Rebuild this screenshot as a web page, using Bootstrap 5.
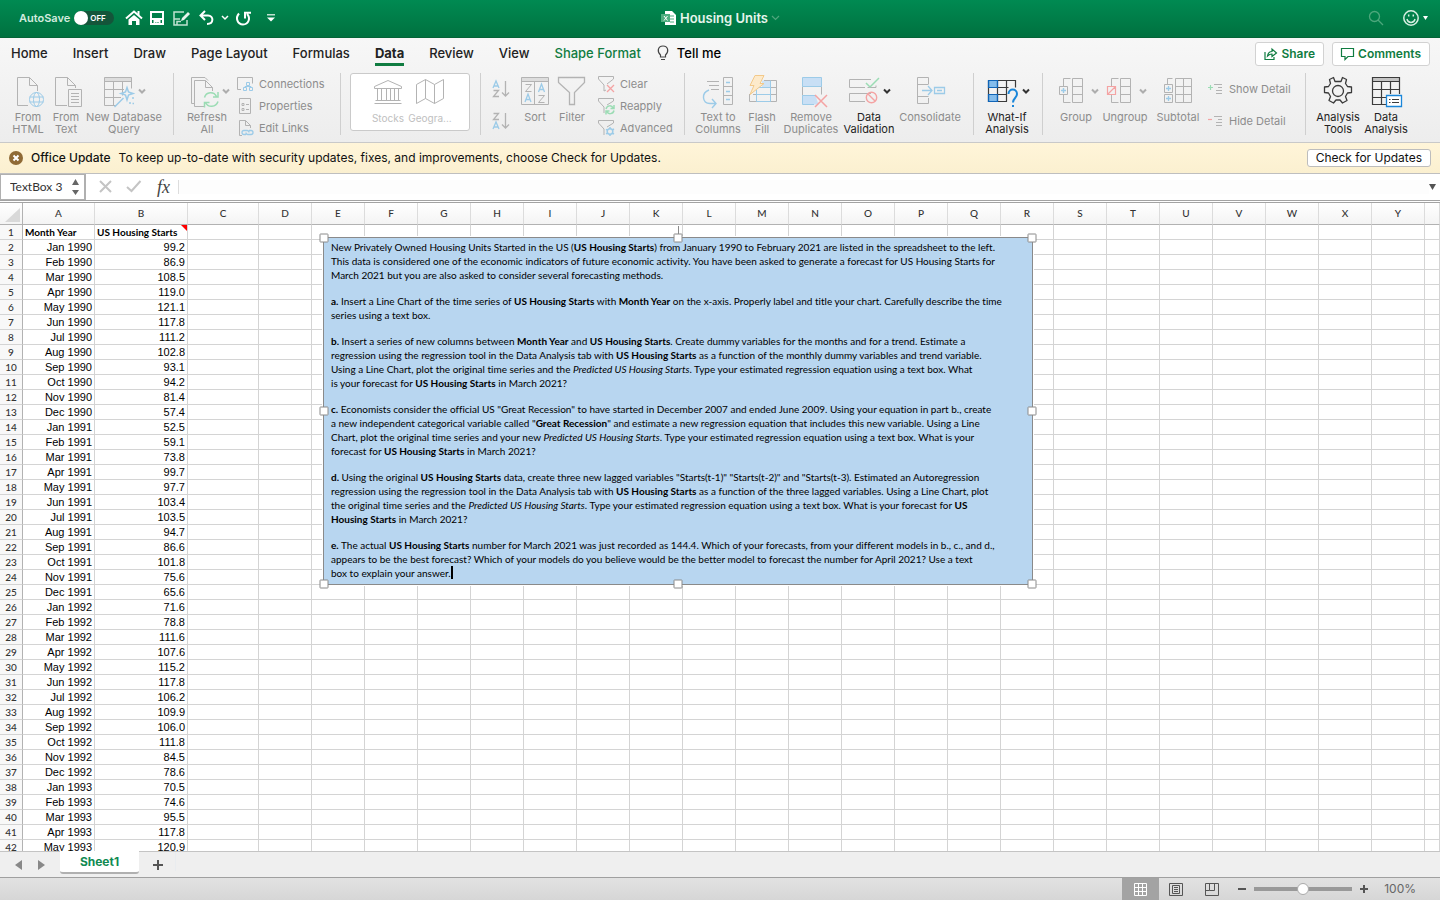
<!DOCTYPE html>
<html lang="en">
<head>
<meta charset="utf-8">
<meta name="viewport" content="width=device-width, initial-scale=1">
<title>Housing Units</title>
<link rel="stylesheet" href="https://cdn.jsdelivr.net/npm/bootstrap@5.3.0/dist/css/bootstrap.min.css">
<style>
:root{--ui:Inter,"Liberation Sans",sans-serif;--cal:Lato,"Open Sans",sans-serif;--g:#107c41}
body{font-family:var(--ui);font-size:13px;line-height:16px;color:#222;background:#fff}
a{text-decoration:none;color:inherit}
button{color:inherit}
svg{display:block;overflow:visible;fill:none;flex:none}
.plain{border:0;background:none;padding:0}
/* title bar */
.titlebar{height:38px;background:linear-gradient(#008a52,#00713f);color:#fff;display:grid;grid-template-columns:1fr auto 1fr;border-bottom:1px solid #056437}
.autosave{font-size:11px;font-weight:600;color:#d3ebdf}
.lead-in{padding-left:19px}
.switch{position:relative;width:40px;height:14px}
.switch input{appearance:none;width:40px;height:14px;border-radius:7px;background:#14553a;margin:0;display:block}
.switch input::before{content:"";display:block;width:14px;height:14px;border-radius:50%;background:#fff}
.switch span{position:absolute;left:16px;top:0;font-size:8px;line-height:14px;font-weight:600;color:#fff;pointer-events:none}
.doc{font-weight:600;color:#e6f4ec}
/* tabs and ribbon */
.top{background:linear-gradient(#f7f7f7,#ededed);border-bottom:1px solid #c9c9c9}
.tabs{height:34px;padding:0 10px 0 11px}
.tabs ul{gap:25px}
.tabs ul a{font-weight:500;display:block;line-height:20px;border-bottom:3px solid transparent;margin-top:5px}
.tabs ul a.on{font-weight:700;border-color:var(--g)}
.tabs .tell{font-weight:500;color:#000;margin-top:7px}
.green{color:var(--g)}
.pill{height:24px;border:1px solid #d2d2d2;border-radius:3px;background:#fff;color:var(--g);font-weight:600;font-size:12px;padding:0 8px}
.ribbon{height:70px}
.grp{height:62px;margin-top:1px;border-right:1px solid #cfcfcf;box-sizing:border-box}
.grp:last-child{border:0}
.rb{display:flex;flex-direction:column;align-items:center;font-size:11px;line-height:12px;color:#8d8d8d;white-space:nowrap;text-align:center}
.rb svg{margin-top:1px;width:50px;height:37px}
.rb.act{color:#222}
.lst{display:flex;flex-direction:column}
.lst button{display:flex;align-items:center;gap:6px;height:22px;font-size:11px;color:#8d8d8d;white-space:nowrap}
.lst svg{width:16px;height:16px}
.lst.two button{height:32px;gap:7px}
.lst.two svg{width:14px}
.lst.two .wide{width:20px}
.w30{width:30px}.w34{width:34px}.w36{width:36px}.w38{width:38px}.w42{width:42px}.w44{width:44px}.w46{width:46px}.w54{width:54px}.w60{width:60px}.w78{width:78px}
.g1{width:174px;padding-left:9px}.g2{width:167px;padding-left:11px}.g3{width:140px;padding-left:9px}.g4{width:204px;padding-left:11px}
.g5{width:289px;padding-left:11px}.g6{width:69px;padding-left:10px}.g7{width:263px;padding-left:15px}.g8{padding-left:10px}
.gallery{width:120px;height:58px;background:#fff;border:1px solid #cacaca;border-radius:3px;padding-left:16px}
.gallery .rb{font-size:10px;color:#c0c0c0}
.k{stroke:#b3b3b3}.d{stroke:#3b3b3b}.b{stroke:#9ccbe8}.r{stroke:#f4a3a3}.n{stroke:#9bdcb4}.car{stroke:#adadad;stroke-width:2}
.car.d{stroke:#333}
/* message bar */
.msg{height:31px;background:linear-gradient(#fff5d9,#fbf0d0);border-bottom:1px solid #bfbfbf;padding:0 9px;color:#111;font-size:12px}
.msg b{font-weight:500}
.check{height:18px;line-height:16px;border:1px solid #bdbdbd;border-radius:3px;background:#fff;font-size:12px;padding:0 8px}
/* formula bar */
.fbar{height:27px;border-bottom:1px solid #a3a3a3}
.namebox{width:86px;border:1px solid #b0b0b0;border-right-width:2px;font-family:var(--cal);font-size:12px}
.namebox input{width:63px;border:0;padding:0 0 0 9px;outline:0;background:none;color:#333}
.tools{gap:16px;margin-left:14px}
.fx{font-family:"Liberation Serif",serif;font-style:italic;font-size:18px;color:#444}
.fin{border:0;border-left:1px solid #ddd;height:14px;outline:0;background:#fdfdfd}
/* sheet */
.work{border-top:1px solid #a3a3a3;margin-top:1px;min-height:0;overflow:hidden}
.cells{table-layout:fixed;width:100%;border-collapse:separate;border-spacing:0;font:11px/14px "Liberation Sans",sans-serif;color:#000}
.cells td,.cells th{padding:0 2px;border-right:1px solid #d4d4d4;border-bottom:1px solid #d4d4d4;white-space:nowrap;height:15px;overflow:hidden}
.cells td{text-align:right}
.cells tbody th,.cells thead th{font:500 10px/14px var(--cal);color:#333;text-align:center;background:#f8f8f8;padding:0}
.cells thead th{height:22px;border-bottom-color:#b2b2b2;border-right-color:#dcdcdc;background:linear-gradient(#fff,#f4f4f4)}
.cells tbody th,.cells thead th:first-child{border-right-color:#b2b2b2}
.cells tbody tr:first-child td{font:700 10px/14px var(--cal);text-align:left}
.note{position:relative}
.note::after{content:"";position:absolute;right:0;top:0;border:3px solid red;border-left-color:transparent;border-bottom-color:transparent}
.corner{margin:5px 2px 2px 5px;width:15px;height:14px}
.tbox{position:absolute;left:323px;top:34px;width:710px;padding:2px 7px 4px;background:#b8d6f0;border:1px solid #8a8a8a;box-shadow:0 0 0 1px #fff;font:10px/14px var(--cal);font-variant-ligatures:none;color:#000;white-space:nowrap}
.tbox p{margin:0 0 12px}.tbox p:last-of-type{margin:0}
.hd{position:absolute;width:9px;height:9px;background:#fff;border:1px solid #8a8a8a;border-radius:1px;transform:translate(-50%,-50%)}
.stem{position:absolute;left:50%;bottom:100%;height:12px;border-left:1px solid #8a8a8a}
.caret{display:inline-block;width:2px;height:13px;background:#000;vertical-align:-2px}
/* bottom bars */
.sheets{height:27px;background:#efefef;border-top:1px solid #c4c4c4;border-bottom:1px solid #a0a0a0;padding-left:15px}
.sheettab{width:79px;height:23px;margin:-1px 0 0 15px;background:#fff;color:#108a52;font-weight:700;font-size:12px;border:0;border-bottom:2px solid #b0b0b0;border-radius:0 0 3px 3px}
.newtab{margin-left:14px}
.status{height:22px;background:linear-gradient(#e2e2e2,#d6d6d6);color:#666;font-size:12px}
.vw{width:37px;height:22px;display:flex;align-items:center;justify-content:center}
.vw.mid{width:34px}
.vw.on{background:#a3a3a3}
.zoomer{appearance:none;width:98px;height:14px;background:linear-gradient(#999,#999) center/100% 4px no-repeat;margin:0;border-radius:2px}
.zoomer::-webkit-slider-thumb{appearance:none;width:12px;height:12px;border-radius:50%;background:#fff;border:1px solid #aaa}
</style>
</head>
<body class="vh-100 d-flex flex-column overflow-hidden">
<header class="titlebar">
  <div class="d-flex align-items-center lead-in">
    <label for="as" class="autosave">AutoSave</label>
    <div class="switch ms-1"><input type="checkbox" id="as"><span>OFF</span></div>
    <button class="plain ms-2 ps-1" aria-label="Home"><svg width="16" height="16" stroke="#fff" stroke-width="2"><path d="M0 8.500 8 1.500l8 7"/><path d="M2.500 9.500 8 5l5.500 4.500V15h-3.500v-4H6v4H2.500z" fill="#fff" stroke="none"/><path d="M12.500 1v4" /></svg></button>
    <button class="plain ms-2" aria-label="Save"><svg width="14" height="14" stroke="#fff" stroke-width="2"><path d="M1 1h12v12H1z"/><path d="M1 8h12M4.500 13v-3h5v3"/><path d="M6 11h1v2" stroke-width="1"/></svg></button>
    <button class="plain ms-2" aria-label="Save as"><svg width="19" height="15" stroke="#bfe2d0" stroke-width="1.500"><path d="M12 1H2v13h13V9M2 8h6M5 13.500v-3h4"/><path d="m9 10 1-3 6-6 2 2-6 6z" fill="#e6f4ec" stroke="none"/></svg></button>
    <button class="plain ms-2" aria-label="Undo"><svg width="15" height="14" stroke="#fff" stroke-width="2"><path d="M6 0 1.500 4.500 6 9M2 4.500h7c6 0 6 8.500-1 8.500"/></svg></button>
    <button class="plain ms-2" aria-label="Undo list"><svg width="6" height="4" stroke="#fff" stroke-width="1.500"><path d="m0 0 3 3 3-3"/></svg></button>
    <button class="plain ms-2" aria-label="Redo"><svg width="15" height="15" stroke="#fff" stroke-width="2"><path d="M3 2.500C-1 7 1.500 13.500 7 13.500S15 7 11 3M9 7.500V1.800h6"/></svg></button>
    <button class="plain ms-3" aria-label="Customize toolbar"><svg width="8" height="8" fill="#fff"><path d="M0 0h8v1.500H0z" fill="#bfe2d0"/><path d="M0 3.500h8L4 7.500z" fill="#fff"/></svg></button>
  </div>
  <div class="d-flex align-items-center doc gap-1">
    <svg width="15" height="14"><path d="M4 0h7l4 4v10H4z" fill="#fff"/><path d="M9 5h4M9 8h4M9 11h4" stroke="#4eae80"/><path d="M0 3h9v8H0z" fill="#4eae80"/><path d="m3 5 3.500 4.500M6.500 5 3 9.500" stroke="#fff"/></svg>
    <span>Housing Units</span>
    <svg width="7" height="4" stroke="#4fa67d" stroke-width="1.200"><path d="m0 0 3.500 3.500L7 0"/></svg>
  </div>
  <div class="d-flex align-items-center justify-content-end pe-2 me-1">
    <button class="plain" aria-label="Search"><svg width="14" height="14" stroke="#4da77c" stroke-width="1.300"><circle cx="5.500" cy="5.500" r="5"/><path d="m9 9 5 5"/></svg></button>
    <button class="plain d-flex align-items-center ms-3 gap-1" aria-label="Feedback"><svg class="ms-1" width="16" height="16" stroke="#d6efe2" stroke-width="1.500"><circle cx="8" cy="8" r="7.200"/><path d="M4 9c1 4.500 7 4.500 8 0M5.700 4.500v2M10.300 4.500v2"/></svg><svg width="5" height="4"><path d="M0 0h5L2.500 4z" fill="#fff"/></svg></button>
  </div>
</header>

<div class="top">
  <nav class="tabs d-flex align-items-start">
    <ul class="list-unstyled d-flex m-0">
      <li><a href="#">Home</a></li><li><a href="#">Insert</a></li><li><a href="#">Draw</a></li><li><a href="#">Page Layout</a></li><li><a href="#">Formulas</a></li><li><a href="#" class="on">Data</a></li><li><a href="#">Review</a></li><li><a href="#">View</a></li><li><a href="#" class="green">Shape Format</a></li>
    </ul>
    <a href="#" class="tell d-flex align-items-center gap-2 ms-3"><svg width="12" height="16" stroke="#444" stroke-width="1.200"><path d="M3.500 12V10C0 7 .500 1 6 1s6 6 2.500 9v2zM4 14.500h4"/></svg>Tell me</a>
    <div class="ms-auto d-flex gap-2 pt-1">
      <button class="pill d-flex align-items-center gap-1"><svg width="13" height="12" stroke="#107c41" stroke-width="1.200"><path d="M1 4v7.500h9V9"/><path d="M3.500 8C4 5 5.500 3.500 8 3.500V1l4.500 4L8 8.500V6C6 6 5 6.500 3.500 8z"/></svg>Share</button>
      <button class="pill d-flex align-items-center gap-1"><svg width="13" height="12" stroke="#107c41" stroke-width="1.200"><path d="M.500.500h12v8H7L4 11.500V8.500H.500z"/></svg>Comments</button>
    </div>
  </nav>
  <div class="ribbon d-flex">
    <div class="grp g1 d-flex align-items-start">
      <button class="plain rb w38"><svg viewBox="-25 0 50 37"><g class="k"><path d="M0 31.500h-10.500v-28h12l8 8V17M1.500 3.500v8h8"/></g><g class="b"><circle cx="8.500" cy="25.500" r="7"/><ellipse cx="8.500" cy="25.500" rx="3" ry="7"/><path d="M1.500 23h14M1.500 28h14"/></g></svg>From<br>HTML</button>
      <button class="plain rb w38"><svg viewBox="-25 0 50 37"><g class="k"><path d="M1 31.500h-11.500v-28h12l8 8V14M1.500 3.500v8h8M2.500 15.500h13v17h-13zM5 19.500h8M5 22.500h8M5 25.500h8M5 28.500h8"/></g></svg>From<br>Text</button>
      <button class="plain rb w78"><svg viewBox="-25 0 50 37"><path d="M-20 3.500H8v4h-28z" fill="#ddd"/><path class="k" d="M-8 31.500h-11.500v-28h27v11M-19.500 7.500h27M-19.500 15.500H0M-19.500 23.500H-3M-10.500 7.500v24M-1.500 7.500v14"/><path class="b" stroke-width="1.500" d="M-9.500 33-.500 24M3 13.500l1.500 4.500 4.500 1.500L4.500 21 3 26l-1.500-5L-3 19.500 1.500 18zM8 24h2M5 29h2M8.500 29.500h1.500"/><path class="car" d="m15 15.500 3 3 3-3"/></svg>New Database<br>Query</button>
    </div>
    <div class="grp g2 d-flex align-items-start">
      <button class="plain rb w44"><svg viewBox="-25 0 50 37"><path class="k" d="M-13 29.500h-2.500v-26H-2l3 3M-3 32.500h-9.500v-26h11l7 7V17M-1.500 6.500v7h7"/><path class="n" stroke-width="1.500" d="M-2.500 23.500C-1 17.500 7 17 9.500 22.500M11 18v5H6M11 27.500C9 33.500 1 34-1.500 28.500M-2.500 33.500v-5h5"/><path class="car" d="m16 15.500 3 3 3-3"/></svg>Refresh<br>All</button>
      <div class="lst ms-2">
        <button class="plain"><svg><path class="k" d="M4 13.500H.500V1.500h15v6"/><path class="b" d="M6.500 11.500h3v3h-3zM12.500 11.500h3v3h-3zM9.500 6.500h3v3h-3zM8 11.500v-1h6v1M11 9.500v1"/></svg>Connections</button>
        <button class="plain"><svg><path class="k" d="M2.500.500h11v15h-11zM5 5.500h2v2H5zM5 10.500h2v2H5zM9 6.500h3M9 11.500h3"/></svg>Properties</button>
        <button class="plain"><svg><path class="k" d="M5 15.500H2.500V.500h6l5 5V8M8.500.500v5h5"/><path class="b" stroke-width="1.300" d="M9 14.500H7a2 2 0 0 1 0-4h3a2 2 0 0 1 2 2M12 10.500h2a2 2 0 0 1 0 4h-3a2 2 0 0 1-2-2"/></svg>Edit Links</button>
      </div>
    </div>
    <div class="grp g3">
      <div class="gallery d-flex align-items-start">
        <button class="plain rb w42"><svg viewBox="-25 0 50 37"><path class="k" d="M-13.500 11.500 0 5.500l13.500 6v2h-27zM-13.500 28.500h27M-12.500 25.500h25M-10.500 13.500v12M-6.500 13.500v12M-1.500 13.500v12M2.500 13.500v12M6.500 13.500v12M10.500 13.500v12"/></svg>Stocks</button>
        <button class="plain rb w42"><svg viewBox="-25 0 50 37"><path class="k" d="M-13.500 9.500l9-5 9 5 9-5v19l-9 5-9-5-9 5zM-4.500 4.500v19M4.500 9.500v19"/></svg>Geogra...</button>
      </div>
    </div>
    <div class="grp g4 d-flex align-items-start">
      <div class="lst two">
        <button class="plain" aria-label="Sort ascending"><svg class="wide"><path class="b" stroke-width="1.300" d="M1 7 4 0l3 7M2 5h4"/><path class="k" stroke-width="1.300" d="M1.500 9.500h5l-5 6h5.500M13.500 0v15M10 11.500l3.500 3.500 3.500-3.500"/></svg></button>
        <button class="plain" aria-label="Sort descending"><svg class="wide"><path class="b" stroke-width="1.300" d="M1 16l3-7 3 7M2 14h4"/><path class="k" stroke-width="1.300" d="M1.500.500h5l-5 6h5.500M13.500 0v15M10 11.500l3.500 3.500 3.500-3.500"/></svg></button>
      </div>
      <button class="plain rb w30 ms-2"><svg viewBox="-25 0 50 37"><path d="M-13.500 3.500h27v4h-27z" fill="#ddd"/><path class="k" d="M-13.500 3.500h27v27h-27zM-13.500 7.500h27M-.500 7.500v23M-9.500 10.500h6l-6 7h6M3.500 21.500h6l-6 7h6"/><path class="b" stroke-width="1.300" d="m3.500 18 3-8 3 8M4.500 15.500h4M-10 28l3-8 3 8M-9 25.500h4"/></svg>Sort</button>
      <button class="plain rb w36 ms-1"><svg viewBox="-25 0 50 37"><path class="k" stroke-width="1.300" d="M-13.500 3.500h26v5l-10 10v12h-5v-12l-11-10z"/></svg>Filter</button>
      <div class="lst ms-2">
        <button class="plain"><svg><path class="k" d="M9 8l6.500-5V.500H.500V3l5.500 6v6l2-1"/><path class="r" stroke-width="1.300" d="m9 9 7 7M16 9l-7 7"/></svg>Clear</button>
        <button class="plain"><svg><path class="k" d="M9 7l6.500-4V.500H.500V3l5.500 6v6"/><path class="n" stroke-width="1.500" d="M8 11c1-4 6-4 7-1M16 7v3.500h-3.500M16 12.500c-1 4-6 4-7 1M8 16.500V13h3.500"/></svg>Reapply</button>
        <button class="plain"><svg><path class="k" d="M9 7l6.500-4V.500H.500V3l5.500 6v6"/><circle class="b" cx="12" cy="11.500" r="2.800" stroke-width="1.500"/><path class="b" d="M12 7v2M12 14v2M8 9.300l2 1M14 13l2 1M8 13.800l2-1M14 10l2-1" stroke-width="1.500"/></svg>Advanced</button>
      </div>
    </div>
    <div class="grp g5 d-flex align-items-start">
      <button class="plain rb w44"><svg viewBox="-25 0 50 37"><path class="k" d="M5.500 3.500h9v27h-9zM5.500 12.500h9M5.500 21.500h9M-11 7.500H1M-9 11.500H1M-7 15.500H1"/><path class="b" stroke-width="1.400" d="M8 8.500h4M8 17.500h4M8 25.500h4M-9 16c-8 3-7 13 1 13.500H-2M-6 25l4 4.500-4 4.500"/></svg>Text to<br>Columns</button>
      <button class="plain rb w44"><svg viewBox="-25 0 50 37"><path d="M0 6.500h8v7H0z" fill="#cfe3f5"/><path class="k" d="M-12.500 20v7.500h27v-21H2M-9 20.500h23.500M0 13.500h14.500M8.500 6.500v21"/><path class="b" d="M-5.500 16v11.500h14v-21M-5.500 13.500h14M-5.500 20.500h14"/><path d="M-7 1.500h9l-4 8h4l-14 11 4-9h-4z" fill="#fdeacb" stroke="#f3c98a"/></svg>Flash<br>Fill</button>
      <button class="plain rb w54"><svg viewBox="-25 0 50 37"><path d="M-8.500 3.500h19v9h-19zM-8.500 21.500h13l3 9h-16z" fill="#c8dff5"/><path class="k" d="M-8.500 12.500v9M10.500 12.500v8"/><path class="b" d="M-8.500 3.500h19v9h-19zM5 21.500H-8.500v9H3"/><path class="r" stroke-width="1.500" d="M4 21l12 12M16 21 4 33"/></svg>Remove<br>Duplicates</button>
      <button class="plain rb act w54 ms-1"><svg viewBox="-25 0 50 37"><path class="k" d="M2 5.500h-21.500v8H-4M2 19.500h-21.500v8H-4M-1.500 13.500H7v-2"/><path class="n" stroke-width="1.500" d="m-3 9 4 4 9-9"/><circle class="r" cx="2.500" cy="23.500" r="5.200" stroke-width="1.400"/><path class="r" stroke-width="1.400" d="m-1 20 7 7"/><path class="car d" d="m15 15.500 3 3 3-3"/></svg>Data<br>Validation</button>
      <button class="plain rb w60 ms-1"><svg viewBox="-25 0 50 37"><path class="k" d="M-1.500 10v-6.500h-11v26h11V24M-12.500 10.500h11M-12.500 22.500h11"/><path class="b" stroke-width="1.300" d="M-8 16.500H2M-2 12l4 4.500-4 4.500M4.500 13.500h10v6h-10zM7 16.500h5"/></svg>Consolidate</button>
    </div>
    <div class="grp g6 d-flex align-items-start">
      <button class="plain rb act w46"><svg viewBox="-25 0 50 37"><path d="M-18.500 6.500h9v7h-9zM-18.500 20.500h9v7h-9z" fill="#83bcec"/><path class="d" stroke-width="1.200" d="M-18.500 6.500h27v7M-18.500 6.500v21H0M-18.500 13.500h20M-18.500 20.500H0M-9.500 6.500v21M-.500 6.500v21"/><path stroke="#1065b8" stroke-width="1.200" d="M-18.500 6.500h9v7h-9zM-18.500 20.500h9v7h-9z"/><path stroke="#1a86d9" stroke-width="2" d="M1.500 20c0-6 8.500-6 8.500 0 0 4-4 4-4 8.500M6 31v2"/><path class="car d" d="m16 15.500 3 3 3-3"/></svg>What-If<br>Analysis</button>
    </div>
    <div class="grp g7 d-flex align-items-start">
      <button class="plain rb w36"><svg viewBox="-25 0 50 37"><path class="k" d="M-3.500 4.500h10v24h-10zM-3.500 12.500h10M-3.500 20.500h10M-12.500 12V4.500h7M-12.500 21v7.500h7M-16.500 12.500h8v8h-8z"/><path class="b" stroke-width="1.400" d="M-12.500 14v5M-15 16.500h5"/><path class="car" d="m16 15.500 3 3 3-3"/></svg>Group</button>
      <button class="plain rb w46 ms-2"><svg viewBox="-25 0 50 37"><path class="k" d="M-4.500 4.500h10v24h-10zM-4.500 12.500h10M-4.500 20.500h10M-13.500 12V4.500h7M-13.500 21v7.500h7"/><path class="r" stroke-width="1.200" d="M-17.500 12.500h8v8h-8zM-17 20l7-7"/><path class="car" d="m15 15.500 3 3 3-3"/></svg>Ungroup</button>
      <button class="plain rb w44 ms-2"><svg viewBox="-25 0 50 37"><path class="k" d="M-2.500 4.500h16v24h-16zM-2.500 12.500h16M-2.500 20.500h16M5.500 4.500v24M-10.500 10V4.500h5M-13.500 10.500h8v8h-8zM-13.500 20.500h8v8h-8z"/><path class="b" stroke-width="1.300" d="M-9.500 12v5M-12 14.500h5M-9.500 22v5M-12 24.500h5"/></svg>Subtotal</button>
      <div class="lst two ms-2">
        <button class="plain"><svg viewBox="0 0 14 16"><path class="n" stroke-width="1.200" d="M0 6.500h5M2.500 4v5"/><path class="k" d="M6 3.500h8M10 6.500h4M8 9.500h6M8 12.500h6"/></svg>Show Detail</button>
        <button class="plain"><svg viewBox="0 0 14 16"><path class="r" stroke-width="1.200" d="M0 6.500h4"/><path class="k" d="M6 3.500h8M10 6.500h4M8 9.500h6M8 12.500h6"/></svg>Hide Detail</button>
      </div>
    </div>
    <div class="grp g8 d-flex align-items-start">
      <button class="plain rb act w44"><svg viewBox="-25 0 50 37"><g class="d" stroke-width="1.300" stroke-linejoin="round"><circle cy="17" r="5.500"/><path d="M-3 7.500-4.500 3.500-8.500 5.500-7.500 9.500-9.500 12.500-13.500 13v5.500l4 .500 2 3.500-1.500 4 4.500 2.500L-2 26h4l2.500 3 4.500-2.500-1.500-4 2-3.500 4-.500V13l-4-.500-2-3 1-4-4-2L3 7.500z"/></g></svg>Analysis<br>Tools</button>
      <button class="plain rb act w44 ms-1"><svg viewBox="-25 0 50 37"><path d="M-13.500 3.500h27v4h-27z" fill="#c4c4c4"/><path class="d" stroke-width="1.200" d="M0 30.500h-13.500v-27h27V20M-13.500 7.500h27M-13.500 15.500h27M-13.500 23.500H0M-4.500 7.500v23M4.500 7.500V20"/><path d="M.500 21.500h15v11H.500z" fill="#fff" stroke="#1a86d9" stroke-width="1.300"/><path class="d" d="M6 25.500h7M6 28.500h7M3 25.500h1.500M3 28.500h1.500"/></svg>Data<br>Analysis</button>
    </div>
  </div>
</div>

<div class="msg d-flex align-items-center">
  <button class="plain me-2" aria-label="Dismiss"><svg width="14" height="14"><circle cx="7" cy="7" r="7" fill="#8f6a35"/><path d="m4.500 4.500 5 5M9.500 4.500l-5 5" stroke="#fff" stroke-width="2"/></svg></button>
  <b class="me-2">Office Update</b><span>To keep up-to-date with security updates, fixes, and improvements, choose Check for Updates.</span>
  <button class="check ms-auto">Check for Updates</button>
</div>

<div class="fbar d-flex align-items-center">
  <div class="namebox d-flex align-items-center h-100"><input aria-label="Name box" value="TextBox 3"><svg class="ms-2" width="7" height="16"><path d="M3.500 0 7 6H0zM3.500 16 7 11H0z" fill="#666"/></svg></div>
  <div class="tools d-flex align-items-center">
    <button class="plain" aria-label="Cancel"><svg width="11" height="11" stroke="#c4c4c4" stroke-width="2"><path d="m0 0 11 11M11 0 0 11"/></svg></button>
    <button class="plain" aria-label="Enter"><svg width="14" height="11" stroke="#c4c4c4" stroke-width="2"><path d="m0 6 4.500 4L13.500 0"/></svg></button>
    <button class="plain fx" aria-label="Insert function">fx</button>
  </div>
  <input class="fin flex-grow-1 ms-2" aria-label="Formula">
  <button class="plain me-1" aria-label="Expand"><svg width="7" height="6"><path d="M0 0h7L3.500 6z" fill="#555"/></svg></button>
</div>

<main class="work flex-grow-1 position-relative">
  <table class="cells"><colgroup id="cg"></colgroup><thead><tr id="hr"><th><svg class="corner"><path d="M15 0v14H0z" fill="#d9d9d9"/></svg></th></tr></thead><tbody id="tb"></tbody></table>
  <div class="tbox" contenteditable="true" spellcheck="false">
<p>New Privately Owned Housing Units Started in the US (<b>US Housing Starts</b>) from January 1990 to February 2021 are listed in the spreadsheet to the left.<br>This data is considered one of the economic indicators of future economic activity. You have been asked to generate a forecast for US Housing Starts for<br>March 2021 but you are also asked to consider several forecasting methods.</p>
<p><b>a.</b> Insert a Line Chart of the time series of <b>US Housing Starts</b> with <b>Month Year</b> on the x-axis. Properly label and title your chart. Carefully describe the time<br>series using a text box.</p>
<p><b>b.</b> Insert a series of new columns between <b>Month Year</b> and <b>US Housing Starts</b>. Create dummy variables for the months and for a trend. Estimate a<br>regression using the regression tool in the Data Analysis tab with <b>US Housing Starts</b> as a function of the monthly dummy variables and trend variable.<br>Using a Line Chart, plot the original time series and the <i>Predicted US Housing Starts</i>. Type your estimated regression equation using a text box. What<br>is your forecast for <b>US Housing Starts</b> in March 2021?</p>
<p><b>c.</b> Economists consider the official US "Great Recession" to have started in December 2007 and ended June 2009. Using your equation in part b., create<br>a new independent categorical variable called "<b>Great Recession</b>" and estimate a new regression equation that includes this new variable. Using a Line<br>Chart, plot the original time series and your new <i>Predicted US Housing Starts</i>. Type your estimated regression equation using a text box. What is your<br>forecast for <b>US Housing Starts</b> in March 2021?</p>
<p><b>d.</b> Using the original <b>US Housing Starts</b> data, create three new lagged variables "Starts(t-1)" "Starts(t-2)" and "Starts(t-3). Estimated an Autoregression<br>regression using the regression tool in the Data Analysis tab with <b>US Housing Starts</b> as a function of the three lagged variables. Using a Line Chart, plot<br>the original time series and the <i>Predicted US Housing Starts</i>. Type your estimated regression equation using a text box. What is your forecast for <b>US</b><br><b>Housing Starts</b> in March 2021?</p>
<p><b>e.</b> The actual <b>US Housing Starts</b> number for March 2021 was just recorded as 144.4. Which of your forecasts, from your different models in b., c., and d.,<br>appears to be the best forecast? Which of your models do you believe would be the better model to forecast the number for April 2021? Use a text<br>box to explain your answer.<span class="caret"></span></p>
    <span class="stem"></span>
    <span class="hd top-0 start-0"></span><span class="hd top-0 start-50"></span><span class="hd top-0 start-100"></span>
    <span class="hd top-50 start-0"></span><span class="hd top-50 start-100"></span>
    <span class="hd top-100 start-0"></span><span class="hd top-100 start-50"></span><span class="hd top-100 start-100"></span>
  </div>
</main>

<nav class="sheets d-flex align-items-start">
  <button class="plain mt-2" aria-label="Previous sheet"><svg width="7" height="10"><path d="M7 0v10L0 5z" fill="#888"/></svg></button>
  <button class="plain ms-3 mt-2" aria-label="Next sheet"><svg width="7" height="10"><path d="M0 0v10l7-5z" fill="#888"/></svg></button>
  <button class="sheettab">Sheet1</button>
  <button class="plain newtab mt-2" aria-label="New sheet"><svg width="10" height="10" stroke="#555" stroke-width="2"><path d="M5 0v10M0 5h10"/></svg></button>
  <span class="border-end border-secondary-subtle ms-2 ps-1 h-75"></span>
</nav>
<footer class="status d-flex align-items-center justify-content-end">
  <button class="plain vw on" aria-label="Normal view"><svg width="13" height="13" stroke="#fff"><path d="M.500.500h12v12H.500zM4.500 0v13M8.500 0v13M0 4.500h13M0 8.500h13"/></svg></button>
  <button class="plain vw mid" aria-label="Page layout view"><svg width="14" height="13" stroke="#555"><path d="M.500.500h13v12H.500zM3.500 2.500h7v8h-7zM5 4.500h4M5 6.500h4M5 8.500h4"/></svg></button>
  <button class="plain vw" aria-label="Page break view"><svg width="14" height="13" stroke="#555"><path d="M.500.500h13v12H.500zM4.500.500v7H.500M9.500.500v7h-5"/></svg></button>
  <button class="plain ms-2" aria-label="Zoom out"><svg width="8" height="2"><path d="M0 0h8v2H0z" fill="#555"/></svg></button>
  <input type="range" class="zoomer mx-2" value="50" aria-label="Zoom">
  <button class="plain" aria-label="Zoom in"><svg width="8" height="8" stroke="#555" stroke-width="2"><path d="M4 0v8M0 4h8"/></svg></button>
  <span class="ms-3 me-4">100%</span>
</footer>

<script>
const vals=[99.2,86.9,108.5,119.0,121.1,117.8,111.2,102.8,93.1,94.2,81.4,57.4,52.5,59.1,73.8,99.7,97.7,103.4,103.5,94.7,86.6,101.8,75.6,65.6,71.6,78.8,111.6,107.6,115.2,117.8,106.2,109.9,106.0,111.8,84.5,78.6,70.5,74.6,95.5,117.8,120.9];
const months='Jan Feb Mar Apr May Jun Jul Aug Sep Oct Nov Dec'.split(' ');
const letters=[...'ABCDEFGHIJKLMNOPQRSTUVWXY',''];
const widths=[23,72,93,71].concat(Array(22).fill(53));
document.getElementById('cg').innerHTML=widths.map(w=>`<col style="width:${w}px">`).join('')+'<col>';
document.getElementById('hr').insertAdjacentHTML('beforeend',letters.map(l=>`<th>${l}</th>`).join(''));
const blank='<td></td>'.repeat(24);
document.getElementById('tb').innerHTML='<tr><th>1</th><td>Month Year</td><td class="note">US Housing Starts</td>'+blank+'</tr>'+
 vals.map((v,i)=>`<tr><th>${i+2}</th><td>${months[i%12]} ${1990+Math.floor(i/12)}</td><td>${v.toFixed(1)}</td>${blank}</tr>`).join('');
</script>
<script src="https://cdn.jsdelivr.net/npm/bootstrap@5.3.0/dist/js/bootstrap.bundle.min.js"></script>
</body>
</html>
